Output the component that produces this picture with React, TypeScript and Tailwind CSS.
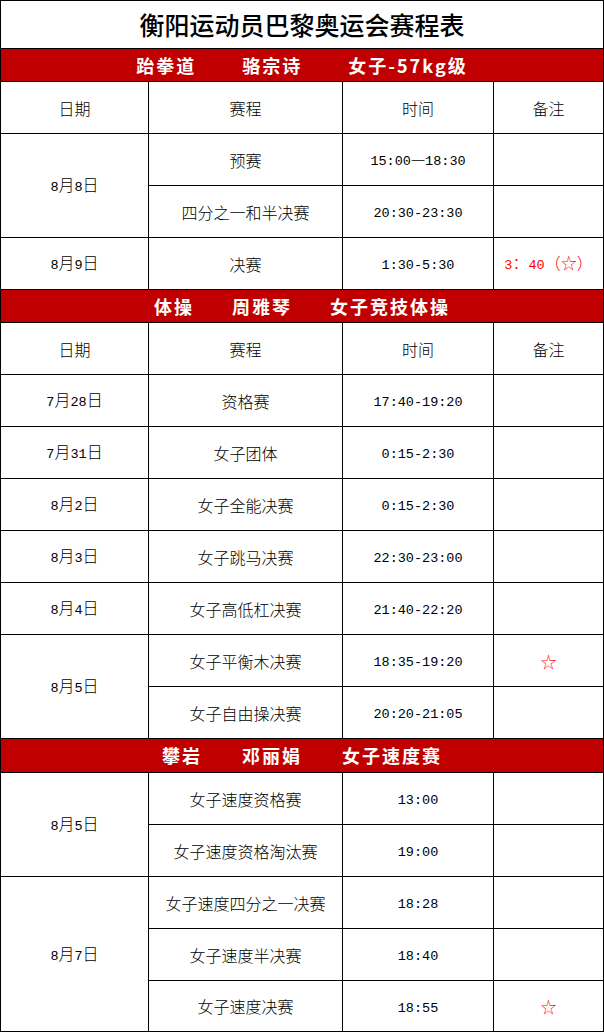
import React from "react";

type Row = { date?: string; span?: number; event: string; time: string; note?: string };
type Section = { title: string[]; gaps: string; bandH: string; header: boolean; rows: Row[] };

const sections: Section[] = [
  {
    title: ["跆拳道", "骆宗诗", "女子-57kg级"],
    gaps: "gap-[46px]",
    bandH: "h-[33px]",
    header: true,
    rows: [
      { date: "8月8日", span: 2, event: "预赛", time: "15:00—18:30" },
      { event: "四分之一和半决赛", time: "20:30-23:30" },
      { date: "8月9日", event: "决赛", time: "1:30-5:30", note: "3：40（☆）" },
    ],
  },
  {
    title: ["体操", "周雅琴", "女子竞技体操"],
    gaps: "gap-[38px]",
    bandH: "h-[33px]",
    header: true,
    rows: [
      { date: "7月28日", event: "资格赛", time: "17:40-19:20" },
      { date: "7月31日", event: "女子团体", time: "0:15-2:30" },
      { date: "8月2日", event: "女子全能决赛", time: "0:15-2:30" },
      { date: "8月3日", event: "女子跳马决赛", time: "22:30-23:00" },
      { date: "8月4日", event: "女子高低杠决赛", time: "21:40-22:20" },
      { date: "8月5日", span: 2, event: "女子平衡木决赛", time: "18:35-19:20", note: "☆" },
      { event: "女子自由操决赛", time: "20:20-21:05" },
    ],
  },
  {
    title: ["攀岩", "邓丽娟", "女子速度赛"],
    gaps: "gap-[40px]",
    bandH: "h-[34px]",
    header: false,
    rows: [
      { date: "8月5日", span: 2, event: "女子速度资格赛", time: "13:00" },
      { event: "女子速度资格淘汰赛", time: "19:00" },
      { date: "8月7日", span: 3, event: "女子速度四分之一决赛", time: "18:28" },
      { event: "女子速度半决赛", time: "18:40" },
      { event: "女子速度决赛", time: "18:55", note: "☆" },
    ],
  },
];

// ascii runs in a mono face, like the half-width glyphs of the original
function Txt({ s }: { s: string }) {
  const parts = s.split(/([\x20-\x7e]+)/).filter(Boolean);
  return (
    <span>
      {parts.map((p, i) =>
        /^[\x20-\x7e]+$/.test(p) ? (
          <span key={i} className="font-['Liberation_Mono',monospace] text-[13.5px] font-normal">
            {p}
          </span>
        ) : (
          <span key={i}>{p}</span>
        )
      )}
    </span>
  );
}

const cell = "border-r border-b border-black flex items-center justify-center";

export default function App() {
  return (
    <div className="w-[604px] bg-white border-l border-t border-black grid grid-cols-[148px_194px_151px_110px] font-['Noto_Sans_CJK_SC',sans-serif] text-[16px] font-light text-black">
      <div className={`${cell} col-span-4 h-[48px] text-[25px] font-medium`}>
        衡阳运动员巴黎奥运会赛程表
      </div>
      {sections.map((sec, si) => (
        <React.Fragment key={si}>
          <div
            className={`${cell} ${sec.gaps} ${sec.bandH} col-span-4 bg-[#c00000] text-white text-[18px] font-bold tracking-[2px]`}
          >
            {sec.title.map((t) => (
              <span key={t}>{t}</span>
            ))}
          </div>
          {sec.header && (
            <>
              <div className={`${cell} h-[52px]`}>日期</div>
              <div className={`${cell} h-[52px]`}>赛程</div>
              <div className={`${cell} h-[52px]`}>时间</div>
              <div className={`${cell} h-[52px]`}>备注</div>
            </>
          )}
          {sec.rows.map((r, ri) => {
            const isLast = si === sections.length - 1 && ri === sec.rows.length - 1;
            const h = isLast ? "h-[51px]" : "h-[52px]";
            const span = r.span === 3 ? "row-span-3" : r.span === 2 ? "row-span-2" : "";
            return (
              <React.Fragment key={ri}>
                {r.date && (
                  <div className={`${cell} ${span}`}>
                    <Txt s={r.date} />
                  </div>
                )}
                <div className={`${cell} ${h} ${r.date ? "" : "col-start-2"}`}>
                  <Txt s={r.event} />
                </div>
                <div className={`${cell} ${h}`}>
                  <Txt s={r.time} />
                </div>
                <div className={`${cell} ${h} text-[#ff0000]`}>
                  {r.note && <Txt s={r.note} />}
                </div>
              </React.Fragment>
            );
          })}
        </React.Fragment>
      ))}
    </div>
  );
}
